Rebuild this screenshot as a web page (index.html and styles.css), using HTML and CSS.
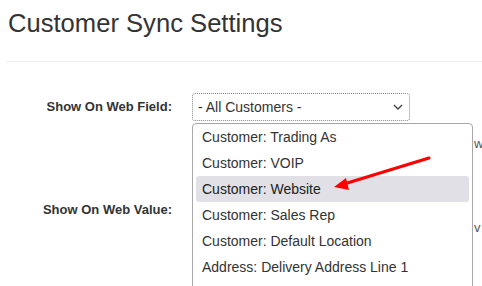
FILE: index.html
```html
<!DOCTYPE html>
<html>
<head>
<meta charset="utf-8">
<link rel="stylesheet" href="styles.css">
</head>
<body>
<div class="page">
  <h1 class="title">Customer Sync Settings</h1>
  <div class="rule"></div>
  <div class="form">
    <div class="row row-field">
      <label class="label">Show On Web Field:</label>
      <div class="select">
        <span>- All Customers -</span>
        <svg class="chev" width="10" height="6" viewBox="0 0 10 6"><path d="M1 1 L5 5 L9 1" fill="none" stroke="#444" stroke-width="1.4"/></svg>
      </div>
      <div class="help help-field">w</div>
    </div>
    <div class="row row-value">
      <label class="label">Show On Web Value:</label>
      <div class="select select-plain"></div>
      <div class="help help-value">v</div>
    </div>
  </div>

  <div class="dropdown">
    <div class="opt">Customer: Trading As</div>
    <div class="opt">Customer: VOIP</div>
    <div class="opt opt-hl">Customer: Website</div>
    <div class="opt">Customer: Sales Rep</div>
    <div class="opt">Customer: Default Location</div>
    <div class="opt">Address: Delivery Address Line 1</div>
  </div>

  <svg class="arrow" width="482" height="286" viewBox="0 0 482 286">
    <line x1="429" y1="158" x2="344" y2="184" stroke="#f00" stroke-width="3" stroke-linecap="round"/>
    <polygon points="334,187 346,178 349,190" fill="#f00"/>
  </svg>
</div>
</body>
</html>
```
FILE: styles.css
```css
html, body {
  margin: 0;
  padding: 0;
  background: #fff;
  overflow: hidden;
}
body {
  font-family: "Liberation Sans", Arial, sans-serif;
  color: #333;
}
.page {
  position: relative;
  width: 482px;
  height: 286px;
  overflow: hidden;
}
.title {
  margin: 0;
  padding: 8px 0 0 8px;
  font-size: 25.6px;
  font-weight: normal;
  line-height: 30px;
  color: #333;
}
.rule {
  margin: 23px 0 0 6px;
  border-top: 1px solid #eee;
}
.form {
  padding-top: 31px;
  display: flex;
  flex-direction: column;
  gap: 47px;
}
.row {
  display: grid;
  grid-template-columns: 172px 218px 1fr;
  column-gap: 20px;
  align-items: start;
  height: 56px;
}
.label {
  text-align: right;
  font-weight: bold;
  font-size: 13px;
  line-height: 28px;
  color: #333;
}
.select {
  box-sizing: border-box;
  width: 218px;
  height: 28px;
  border: 1px dotted #888;
  border-radius: 3px;
  display: flex;
  align-items: center;
  justify-content: space-between;
  padding: 0 5px 0 5px;
  font-size: 14px;
  color: #333;
}
.select-plain {
  border: 1px solid #aaa;
}
.chev {
  margin-right: 1px;
}
.help {
  font-size: 13px;
  color: #555;
  padding-left: 44px;
  white-space: nowrap;
}
.help-field {
  margin-top: 43px;
}
.help-value {
  margin-top: 24px;
}
.dropdown {
  position: absolute;
  left: 192px;
  top: 123px;
  width: 281px;
  box-sizing: border-box;
  border: 1px solid #a8a8a8;
  border-radius: 4px 4px 0 0;
  background: #fff;
  padding: 0 3px;
  height: 180px;
}
.opt {
  height: 26px;
  line-height: 26px;
  padding-left: 6px;
  font-size: 14px;
  color: #333;
  border-radius: 3px;
  white-space: nowrap;
}
.opt-hl {
  background: #e0e0e6;
  color: #222;
}
.arrow {
  position: absolute;
  left: 0;
  top: 0;
  pointer-events: none;
}
```
